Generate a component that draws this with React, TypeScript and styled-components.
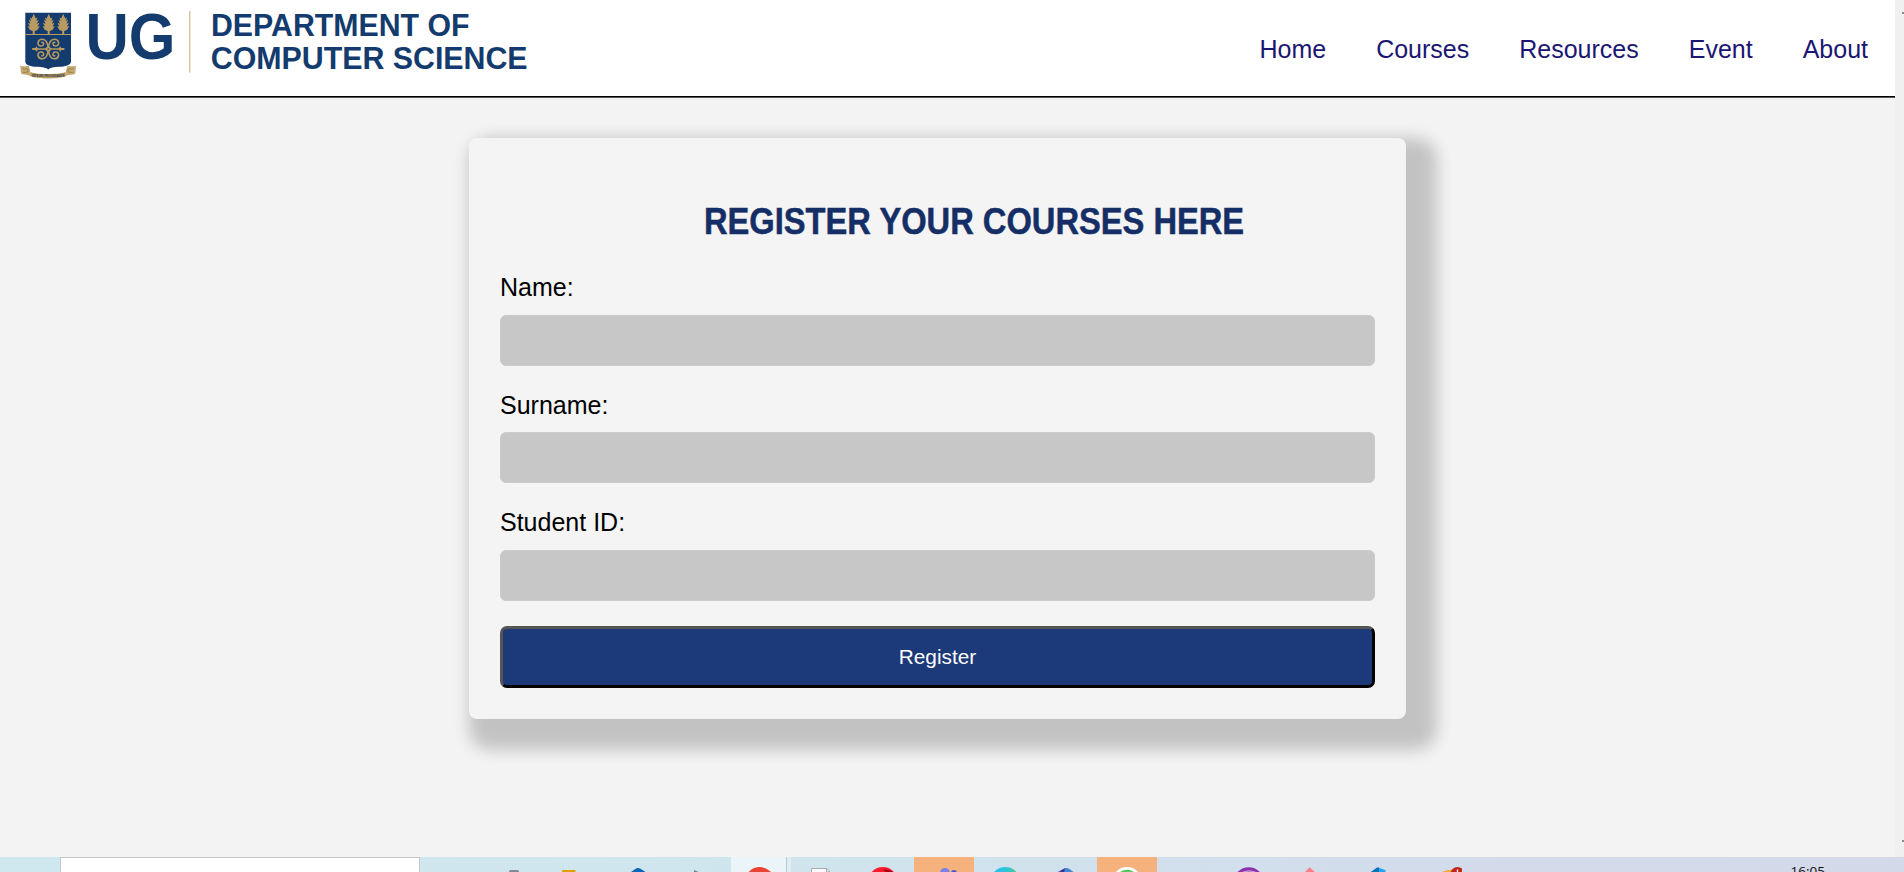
import React from "react";
import styled, { createGlobalStyle } from "styled-components";

const NAVY = "#133b6e";
const GOLD = "#b99a60";

const GlobalStyle = createGlobalStyle`
  *, *::before, *::after { box-sizing: border-box; }
  html, body { margin: 0; padding: 0; overflow: hidden; background: #f3f3f3; }
  body { font-family: "Liberation Sans", Arial, sans-serif; color: #000; }
`;

const Screen = styled.div`
  display: flex;
  flex-direction: column;
  width: 100%;
  height: 872px;
  overflow: hidden;
`;

const Viewport = styled.div`
  display: flex;
  flex: 1;
  min-height: 0;
`;

const Page = styled.div`
  flex: 1;
  background: #f3f3f3;
`;

const Header = styled.header`
  display: flex;
  justify-content: space-between;
  align-items: flex-start;
  height: 98px;
  padding-right: 27px;
  background: #fff;
  border-bottom: 1px solid #555;
  box-shadow: inset 0 -1px 0 #000;
`;

const Nav = styled.nav`
  display: flex;
  gap: 50px;
  padding-top: 35px;
`;

const NavLink = styled.a`
  font-size: 25px;
  line-height: 28px;
  color: #1a1672;
`;

const Main = styled.main`
  padding: 40px 0 0 469px;
`;

const Card = styled.form`
  display: flex;
  flex-direction: column;
  width: 937px;
  height: 581px;
  padding: 63px 31px 31px;
  border-radius: 8px;
  background: #f4f4f4;
  box-shadow: 15.5px 15.5px 16px 15.5px rgba(0, 0, 0, 0.2);
`;

const Title = styled.h1`
  margin: 0 0 32.4px 203.5px;
  width: max-content;
  font-size: 37.8px;
  line-height: 40px;
  font-weight: 700;
  color: #152f66;
  white-space: nowrap;
  -webkit-text-stroke: 0.5px #152f66;
  transform: scaleX(0.864);
  transform-origin: 0 50%;
`;

const Field = styled.div`
  display: flex;
  flex-direction: column;
  gap: 13.6px;
  height: 117.4px;
`;

const Label = styled.label`
  font-size: 25px;
  line-height: 28px;
`;

const Input = styled.input`
  width: 100%;
  height: 51px;
  padding: 0 12px;
  border: 1px solid #cbcbcb;
  border-radius: 6px;
  background: #c7c7c7;
`;

const RegisterButton = styled.button`
  height: 62px;
  margin-top: 0.4px;
  padding: 0;
  border: 3px solid;
  border-color: #555 #000 #000 #555;
  border-radius: 7px;
  background: #1c3979;
  color: #fff;
  font-family: inherit;
  font-size: 20.8px;
`;

const ScrollTrack = styled.div`
  display: flex;
  flex-direction: column;
  justify-content: space-between;
  align-items: flex-end;
  width: 9px;
  padding: 12px 0 15px;
  background: #f0f0f0;
`;

const ScrollArrow = styled.div`
  width: 2px;
  height: 2px;
  background: #8d8d8d;
`;

const Taskbar = styled.footer`
  display: flex;
  height: 15px;
  overflow: hidden;
  background: linear-gradient(90deg, #cfe7ee 0, #cfe6ee 700px, #d1e0ec 1150px, #d3dbea 1500px, #d3d9e8 100%);
`;

const SearchBox = styled.div`
  width: 360px;
  margin: 0 64px 0 60px;
  border: 1px solid #c5c8c9;
  border-bottom: 0;
  background: #fff;
`;

const Task = styled.div<{ $bg?: string; $w?: number }>`
  flex: none;
  width: ${(p) => p.$w ?? 61}px;
  height: 15px;
  background: ${(p) => p.$bg ?? "transparent"};
`;

const TaskIcon = styled.svg`
  display: block;
`;

const GroupEdge = styled.div`
  width: 5px;
  border-left: 1px solid #b5cbd8;
  background: #e0eef4;
`;

const Clock = styled.div`
  margin: 5px 79px 0 auto;
  font-family: "Open Sans", sans-serif;
  font-size: 13.5px;
  line-height: 18px;
  height: 18px;
  color: #111;
`;

const Tree = ({ x }: { x: number }) => (
  <g transform={`translate(${x} 0)`} fill={GOLD}>
    <path d="M0 13.8 2 18.6 3.7 17.6 2.8 21 5 19.8 3.2 23.8 5.8 22.8 3.8 26.8 6.2 26 3.8 30 1 31V34H-1V31L-3.8 30-6.2 26-3.8 26.8-5.8 22.8-3.2 23.8-5 19.8-2.8 21-3.7 17.6-2 18.6Z" />
  </g>
);

const scroll =
  "M48.3 48.5C47.8 43 46.5 39.2 42.3 39.2 37.6 39.2 36.3 45.2 40.6 46 44.2 46.5 44.6 42 41.8 42.2";

const Logo = () => (
  <svg width="560" height="88" viewBox="0 0 560 88" role="img">
    <path d="M25.3 12.8H71V61.5C71 65.5 65 66.5 59 66.8 54 67 50 67.8 48.2 69.5 46.4 67.8 42 67 37 66.8 31 66.5 25.3 65.5 25.3 61.5Z" fill={NAVY} />
    <Tree x={33.7} />
    <Tree x={48.7} />
    <Tree x={63.2} />
    <path d="M25.3 34.5H71" stroke={GOLD} strokeWidth="1" />
    <g fill="none" stroke={GOLD} strokeWidth="1.6" strokeLinecap="round">
      <path d="M34 49H62.6M36.5 47.2V50.8M60.1 47.2V50.8" />
      <path d="M33 49H37M59.6 49H63.6" strokeWidth="2.2" />
      <path d={scroll} />
      <path d={scroll} transform="matrix(-1 0 0 1 96.6 0)" />
      <path d={scroll} transform="matrix(1 0 0 -1 0 98)" />
      <path d={scroll} transform="matrix(-1 0 0 -1 96.6 98)" />
      <circle cx="48.3" cy="49" r="1.8" fill={GOLD} />
    </g>
    <circle cx="48.3" cy="49" r=".8" fill={NAVY} />
    <path d="M20.2 65.3C22 67.5 26 65.2 29 66.3L30.5 72.5C37 75 60 75 65.5 72.5L67.3 66.3C70.5 65.2 74 67.5 76 65.3L75.3 73.5C73.5 75.4 69 74 66.5 75.8 61 79.5 35.5 79.5 29.6 75.8 27 74 23 75.4 21 73.5Z" fill="#c4a973" />
    <path d="M22.5 68.5C25 70 27 68 28 69V72L23 72.5M73.7 68.5C71 70 69 68 68 69V72L73 72.5" stroke="#8d713d" strokeWidth=".7" fill="none" />
    <path d="M31 72.3C38 74.8 58 74.8 65 72.3V75.8C58 78.2 38 78.2 31 75.8Z" fill="#b39557" />
    <text x="32" y="77.2" fontSize="4.3" fontWeight="700" textLength="32.5" lengthAdjust="spacingAndGlyphs" fill="#344057">INTEGRI PROCEDAMUS</text>
    <g fill={NAVY} fontFamily="Liberation Sans, Arial, sans-serif" fontWeight="700">
      <text x="85.4" y="59.2" fontSize="65" textLength="90" lengthAdjust="spacingAndGlyphs">UG</text>
      <text x="211" y="35.8" fontSize="32" textLength="258.5" lengthAdjust="spacingAndGlyphs">DEPARTMENT OF</text>
      <text x="210.8" y="68.6" fontSize="32" textLength="316.8" lengthAdjust="spacingAndGlyphs">COMPUTER SCIENCE</text>
    </g>
    <path d="M189.7 11V72.5" stroke="#d6c3a0" strokeWidth="1.5" />
  </svg>
);

const Glyph = ({ children }: { children?: React.ReactNode }) => (
  <TaskIcon width="61" height="15" viewBox="0 0 61 15">{children}</TaskIcon>
);

const fields = ["Name:", "Surname:", "Student ID:"];
const links = ["Home", "Courses", "Resources", "Event", "About"];

export default function App() {
  return (
    <Screen>
      <GlobalStyle />
      <Viewport>
        <Page>
          <Header>
            <Logo />
            <Nav>{links.map((l) => <NavLink key={l}>{l}</NavLink>)}</Nav>
          </Header>
          <Main>
            <Card>
              <Title>REGISTER YOUR COURSES HERE</Title>
              {fields.map((f) => (
                <Field key={f}>
                  <Label>{f}</Label>
                  <Input />
                </Field>
              ))}
              <RegisterButton type="button">Register</RegisterButton>
            </Card>
          </Main>
        </Page>
        <ScrollTrack>
          <ScrollArrow />
          <ScrollArrow />
        </ScrollTrack>
      </Viewport>
      <Taskbar>
        <SearchBox />
        <Task><Glyph><rect x="25" y="13" width="10" height="6" rx="1.5" fill="#858b96" /></Glyph></Task>
        <Task><Glyph><rect x="17" y="13" width="13.5" height="6" rx="1" fill="#e0a000" /></Glyph></Task>
        <Task><Glyph><path d="M25 15 30 11.6Q32 10.6 34 11.6L39.5 15Z" fill="#0a66b8" /></Glyph></Task>
        <Task $w={64}><Glyph><path d="M27 13 34 16H27Z" fill="#5f8797" /></Glyph></Task>
        <Task $bg="#ebf4f8" $w={55}><Glyph><circle cx="28.8" cy="25" r="15" fill="#ea4335" /></Glyph></Task>
        <GroupEdge />
        <Task $w={62}><Glyph><path d="M20.5 16V11.5H35.5L39.5 16" fill="#fafafa" stroke="#a7adb2" /><path d="M35.5 11V15H39" fill="none" stroke="#a7adb2" /></Glyph></Task>
        <Task><Glyph><circle cx="29.8" cy="25" r="15" fill="#ff1b2d" /><path d="M29 13Q37 11 41 16H33Q32 13 29 13Z" fill="#a70014" /></Glyph></Task>
        <Task $bg="#f6b27c" $w={60}><Glyph><circle cx="31" cy="16" r="5" fill="#7b83eb" /><circle cx="40" cy="16" r="3" fill="#5059c9" /></Glyph></Task>
        <Task $w={62}><Glyph><defs><linearGradient id="wave"><stop offset=".2" stopColor="#2bbdf0" /><stop offset=".6" stopColor="#30c6cf" /><stop offset=".9" stopColor="#4ecb83" /></linearGradient></defs><circle cx="31.3" cy="25" r="15" fill="url(#wave)" /></Glyph></Task>
        <Task><Glyph><path d="M20 16 29 11.2Q31 10.4 33 11.7L39 16Z" fill="#4484d0" /><path d="M21 15.5 29 11.2 26 16Z" fill="#7653a6" /><path d="M25 13.5 29 11.2 28 16H24Z" fill="#303b96" /></Glyph></Task>
        <Task $bg="#f6b27c" $w={60}><Glyph><circle cx="30" cy="25" r="15" fill="#fff" /><circle cx="30" cy="25" r="12.2" fill="#55c861" /></Glyph></Task>
        <Task />
        <Task><Glyph><circle cx="30.7" cy="25.2" r="15" fill="#8c31a9" /><path d="M24 15.5Q31 12.5 38 15.5" fill="none" stroke="#c793d8" strokeWidth="1.3" /></Glyph></Task>
        <Task><Glyph><path d="M26 15 30.5 10.3 36 15Z" fill="#ff7f88" /></Glyph></Task>
        <Task><Glyph><path d="M31 15 38 10.5 45.5 13V15Z" fill="#22a7f0" /><path d="M31 15 37 10.5H39V15Z" fill="#0872b5" /></Glyph></Task>
        <Task><Glyph><path d="M41 15Q47 12 54 13V16H41Z" fill="#edae31" /><circle cx="56.5" cy="16.9" r="7" fill="#c4261b" /><path d="M56.5 12.5V16" stroke="#fff" strokeWidth="1.3" /></Glyph></Task>
        <Clock>16:05</Clock>
      </Taskbar>
    </Screen>
  );
}
